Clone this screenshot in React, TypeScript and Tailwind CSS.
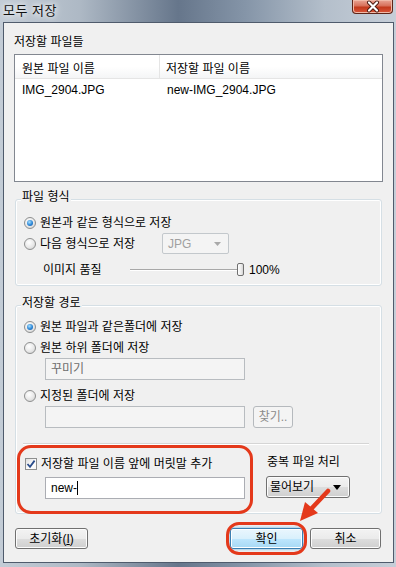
import React from 'react'

const btn =
  'flex items-center rounded-[3px] border border-[#707070] bg-[linear-gradient(180deg,#f3f3f3_0%,#ebebeb_50%,#dddddd_51%,#cfcfcf_100%)] shadow-[inset_0_0_0_1px_#fcfcfc] leading-[14px]'

function Radio({ checked }: { checked?: boolean }) {
  return (
    <span className="w-[12px] h-[12px] shrink-0 rounded-full border border-[#8e8f8f] bg-[radial-gradient(circle_at_40%_35%,#ffffff_0%,#e8e8e8_55%,#c9c9c9_100%)] flex items-center justify-center">
      {checked && (
        <span className="w-[6px] h-[6px] rounded-full bg-[radial-gradient(circle_at_40%_35%,#a8e0ff_0%,#2b86d6_55%,#0f4f9e_100%)]" />
      )}
    </span>
  )
}

function RadioRow({ checked, label }: { checked?: boolean; label: string }) {
  return (
    <div className="h-[21px] ml-[8px] flex items-center gap-[4px]">
      <Radio checked={checked} />
      <span className="leading-[14px]">{label}</span>
    </div>
  )
}

function Group({ title, h, mt, children }: { title: string; h: string; mt: string; children: React.ReactNode }) {
  return (
    <div className={`ml-[11px] w-[367px] ${h} ${mt} rounded-[3px] border border-[#d5dfe5] shadow-[inset_0_0_0_1px_#ffffff] flex flex-col`}>
      <span className="ml-[5px] -mt-[10px] px-[1px] w-fit bg-[#f0f0f0] leading-[14px]">{title}</span>
      {children}
    </div>
  )
}

export default function App() {
  return (
    <div className="relative w-[396px] h-[567px] overflow-hidden bg-[linear-gradient(90deg,#c3ccd6_0%,#aeb9c5_20%,#66768b_45%,#8595a8_62%,#b4bfcb_82%,#c6ced8_100%)] font-['Liberation_Sans','Noto_Sans_CJK_KR',sans-serif] text-[12px] text-black">
      {/* title bar */}
      <div className="h-[22px] flex items-start justify-between">
        <span className="pl-[3px] pt-[3px] leading-[16px] text-[13px] tracking-[0.5px] text-[#111] [text-shadow:0_0_5px_#ffffff,0_0_8px_#ffffff]">모두 저장</span>
        <div className="mr-[3px] w-[41px] h-[14px] rounded-b-[4px] border border-t-0 border-[#5e2418] bg-[linear-gradient(180deg,#e9a595_0%,#d7705a_45%,#c2391c_55%,#d9553a_100%)] shadow-[inset_0_0_0_1px_#f0b9a8]">
          <svg width="41" height="13" viewBox="0 0 41 13">
            <path d="M16 2.5 L24 10.5 M24 2.5 L16 10.5" stroke="#4a1a10" strokeWidth="4" strokeLinecap="round" />
            <path d="M16 2.5 L24 10.5 M24 2.5 L16 10.5" stroke="#ffffff" strokeWidth="2.2" strokeLinecap="round" />
          </svg>
        </div>
      </div>

      {/* client area */}
      <div className="ml-[3px] w-[391px] h-[541px] border border-[#4f5b6c] bg-[#f0f0f0] flex flex-col">
        <span className="ml-[10px] mt-[12px] leading-[14px]">저장할 파일들</span>
        <div className="ml-[10px] mt-[5px] w-[369px] h-[128px] shrink-0 border border-[#828790] bg-white">
          <div className="h-[24px] flex border-b border-[#e5e5e5] bg-[linear-gradient(180deg,#ffffff_0%,#ffffff_50%,#f4f5f6_100%)]">
            <span className="w-[145px] pl-[7px] pt-[7px] leading-[14px] border-r border-[#e5e5e5]">원본 파일 이름</span>
            <span className="pl-[6px] pt-[7px] leading-[14px]">저장할 파일 이름</span>
          </div>
          <div className="h-[20px] mt-[1px] flex items-center">
            <span className="w-[146px] pl-[7px]">IMG_2904.JPG</span>
            <span className="pl-[6px]">new-IMG_2904.JPG</span>
          </div>
        </div>

        <Group title="파일 형식" h="h-[87px]" mt="mt-[17px]">
          <div className="mt-[8px]">
            <RadioRow checked label="원본과 같은 형식으로 저장" />
          </div>
          <div className="h-[21px] flex items-center">
            <div className="ml-[8px] w-[138px] flex items-center gap-[4px]">
              <Radio />
              <span className="leading-[14px]">다음 형식으로 저장</span>
            </div>
            <div className="w-[67px] h-[21px] rounded-[2px] border border-[#c3c8cc] bg-[#f4f4f4] flex items-center justify-between pl-[5px] pr-[7px] text-[#a0a0a0]">
              <span className="leading-[14px]">JPG</span>
              <svg width="7" height="4" viewBox="0 0 7 4">
                <path d="M0 0 H7 L3.5 4 Z" fill="#a9a9a9" />
              </svg>
            </div>
          </div>
          <div className="mt-[5px] h-[21px] flex items-center">
            <span className="ml-[27px] w-[87px] leading-[14px]">이미지 품질</span>
            <div className="w-[107px] h-[2px] border-t border-[#a8a8a8] border-b border-b-white" />
            <div className="w-[7px] h-[13px] rounded-[2px] border border-[#707070] bg-[linear-gradient(90deg,#ffffff_0%,#ececec_60%,#d4d4d4_100%)]" />
            <span className="ml-[5px] leading-[14px]">100%</span>
          </div>
        </Group>

        <Group title="저장할 경로" h="h-[209px]" mt="mt-[19px]">
          <div className="mt-[6px]">
            <RadioRow checked label="원본 파일과 같은폴더에 저장" />
          </div>
          <RadioRow label="원본 하위 폴더에 저장" />
          <div className="ml-[29px] w-[200px] h-[22px] border border-[#b8bcc0] bg-[#f4f4f4] flex items-center pl-[5px] text-[#6d6d6d] leading-[14px]">
            꾸미기
          </div>
          <div className="mt-[5px]">
            <RadioRow label="지정된 폴더에 저장" />
          </div>
          <div className="h-[22px] flex">
            <div className="ml-[29px] w-[200px] h-[22px] border border-[#b8bcc0] bg-[#f4f4f4]" />
            <div className="ml-[8px] w-[40px] h-[22px] rounded-[3px] border border-[#b5b9bd] bg-[#f4f4f4] flex items-center justify-center text-[#8a8a8a] leading-[14px]">
              찾기..
            </div>
          </div>
          <div className="mt-[15px] ml-[7px] w-[346px] h-[2px] border-t border-[#d5d5d5] border-b border-b-white" />
          <div className="flex">
            <div className="w-[250px] pt-[9px] flex flex-col">
              <div className="ml-[9px] h-[19px] flex items-center gap-[4px]">
                <span className="w-[12px] h-[12px] border border-[#8e8f8f] bg-[linear-gradient(135deg,#dcdcdc_0%,#ffffff_60%,#f5f5f5_100%)] flex items-center justify-center">
                  <svg width="10" height="10" viewBox="0 0 10 10">
                    <path d="M1.5 5 L4 7.8 L8.6 1.6" fill="none" stroke="#2a4d8c" strokeWidth="1.8" />
                  </svg>
                </span>
                <span className="leading-[14px]">저장할 파일 이름 앞에 머릿말 추가</span>
              </div>
              <div className="ml-[29px] mt-[4px] w-[200px] h-[22px] border border-[#abadb3] bg-white flex items-center pl-[5px] leading-[14px]">
                new-<span className="w-[1px] h-[14px] bg-black" />
              </div>
            </div>
            <div className="pt-[10px] flex flex-col">
              <span className="ml-[1px] leading-[14px]">중복 파일 처리</span>
              <div className={`${btn} mt-[7px] w-[84px] h-[22px] pl-[3px] pr-[8px]`}>
                <span>물어보기</span>
                <svg className="ml-auto" width="8" height="5" viewBox="0 0 8 5">
                  <path d="M0 0 H8 L4 5 Z" fill="#000" />
                </svg>
              </div>
            </div>
          </div>
        </Group>

        <div className="mt-[14px] flex">
          <div className={`${btn} justify-center h-[21px] ml-[11px] w-[73px]`}>
            <span>
              초기화(<u>I</u>)
            </span>
          </div>
          <div className="h-[21px] ml-auto w-[73px] flex items-center justify-center leading-[14px] rounded-[3px] border border-[#3c7fb1] bg-[linear-gradient(180deg,#eaf6fd_0%,#d9f0fc_50%,#bee6fd_51%,#a7d9f5_100%)] shadow-[inset_0_0_0_1px_#ffffff,0_0_3px_#5ab0e8]">
            확인
          </div>
          <div className={`${btn} justify-center h-[21px] ml-[7px] mr-[12px] w-[71px]`}>취소</div>
        </div>
      </div>

      {/* red annotations */}
      <div className="absolute left-[17px] top-[445px] w-[236px] h-[69px] rounded-[14px] border-[3px] border-[#e4391b]" />
      <div className="absolute left-[226px] top-[522px] w-[81px] h-[33px] rounded-[13px] border-[3px] border-[#e4391b]" />
      <svg className="absolute left-[290px] top-[482px]" width="45" height="45" viewBox="0 0 45 45">
        <path d="M38 9 L22 26" stroke="#e4391b" strokeWidth="4.5" strokeLinecap="round" />
        <path d="M10 39 L15 20 L28 31 Z" fill="#e4391b" />
      </svg>
    </div>
  )
}
